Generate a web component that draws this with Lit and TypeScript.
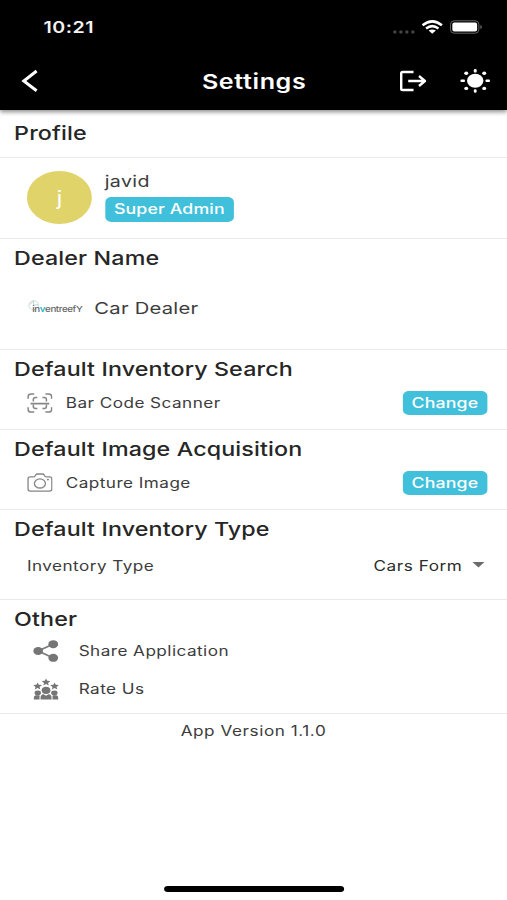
import { LitElement, html, css, svg, type TemplateResult } from "lit";
import { customElement, property } from "lit/decorators.js";

type IconDef = { w: number; h: number; body: TemplateResult };

const star = (x: number, y: number) =>
  svg`<path transform="translate(${x} ${y})" d="M0-3.600 1.200-1.200 4.400-1 2 .9 2.800 3.400 0 2.100-2.800 3.400-2 .9-4.400-1-1.200-1.200Z"/>`;

const icons: Record<string, IconDef> = {
  back: {
    w: 18, h: 24,
    body: svg`<path d="M15.800 2 3 12l12.800 9.800" fill="none" stroke="#fff" stroke-width="3"/>`,
  },
  cell: {
    w: 24, h: 6,
    body: svg`<g fill="#444"><circle cx="3" cy="3" r="1.700"/><circle cx="9" cy="3" r="1.700"/><circle cx="15" cy="3" r="1.700"/><circle cx="21" cy="3" r="1.700"/></g>`,
  },
  wifi: {
    w: 22, h: 14,
    body: svg`<g fill="none" stroke="#fff" stroke-width="2.500"><path d="M1.300 5.300Q11-2.600 20.700 5.300"/><path d="M4.800 8.500Q11 3.700 17.200 8.500"/></g><path d="M7.400 10.600Q11 8.300 14.600 10.600L11 13.700Z" fill="#fff"/>`,
  },
  battery: {
    w: 34, h: 14,
    body: svg`<rect x="1" y=".8" width="28.500" height="12.400" rx="3.800" fill="none" stroke="#666" stroke-width="1"/><rect x="2.900" y="2.500" width="24.800" height="9" rx="2" fill="#fff"/><path d="M30.900 5v4q1.600-.4 1.600-2t-1.600-2Z" fill="#666"/>`,
  },
  logout: {
    w: 28, h: 22,
    body: svg`<g fill="none" stroke="#fff" stroke-width="2.400"><path d="M14.300 2H3.400Q2 2 2 3.300v15.400Q2 20 3.400 20h10.900"/><path d="M9 11h16.500M19.800 6l6 5-6 5"/></g>`,
  },
  sun: {
    w: 32, h: 26,
    body: svg`<g fill="#fff"><ellipse cx="16" cy="12.800" rx="8.200" ry="7"/><rect x="14.600" y="1" width="2.800" height="3.600" rx="1.200"/><rect x="14.600" y="21.200" width="2.800" height="3.600" rx="1.200"/><rect x="1.200" y="11.600" width="4.600" height="2.400" rx="1.100"/><rect x="26.200" y="11.600" width="4.600" height="2.400" rx="1.100"/><ellipse cx="7" cy="5.300" rx="2" ry="1.700"/><ellipse cx="25" cy="5.300" rx="2" ry="1.700"/><ellipse cx="7" cy="20.400" rx="2" ry="1.700"/><ellipse cx="25" cy="20.400" rx="2" ry="1.700"/></g>`,
  },
  scan: {
    w: 26, h: 20,
    body: svg`<g fill="none" stroke="#858585" stroke-width="1.500"><path d="M1.200 5.700V3.600Q1.200 1 4.300 1h3M18.500 1h3q3.200 0 3.200 2.600v2.100M24.700 14.300v2.100q0 2.600-3.200 2.600h-3M7.300 19h-3q-3.100 0-3.100-2.600v-2.100"/><path d="M6.400 8.500V6.600q0-2 2.300-2h1.700M15.500 4.600h1.700q2.300 0 2.300 2v1.900M19.500 11.500v1.900q0 2-2.300 2h-1.700M10.400 15.400H8.700q-2.300 0-2.300-2v-1.900"/><path d="M3.600 10.700h18.800" stroke-width="1.800"/></g>`,
  },
  camera: {
    w: 26, h: 20,
    body: svg`<g fill="none" stroke="#858585" stroke-width="1.300"><path d="M3.300 3.900h3.100q1 0 1.600-.8l.8-1.200q.6-.9 1.800-.9h4.800q1.200 0 1.800.9l.8 1.200q.6.8 1.600.8h3.100q2.200 0 2.200 1.900v10.300q0 2-2.200 2H3.300q-2.200 0-2.200-2V5.800q0-1.900 2.200-1.900Z"/><ellipse cx="13" cy="10.400" rx="5.500" ry="4.600"/></g><ellipse cx="21" cy="6.600" rx="1.100" ry=".9" fill="#858585"/>`,
  },
  share: {
    w: 26, h: 22,
    body: svg`<path d="M20.500 4 5 11l15.500 7" fill="none" stroke="#7d7d7d" stroke-width="1.900"/><g fill="#757575"><ellipse cx="20.200" cy="4.200" rx="4.900" ry="4"/><ellipse cx="5.100" cy="11" rx="4.900" ry="4"/><ellipse cx="20.200" cy="17.800" rx="4.900" ry="4"/></g>`,
  },
  rate: {
    w: 26, h: 22,
    body: svg`<g fill="#757575">${star(13, 4)}${star(4.5, 8)}${star(21.5, 8)}<ellipse cx="13" cy="12.300" rx="4.400" ry="3.600"/><ellipse cx="4.700" cy="15" rx="3.200" ry="2.400"/><ellipse cx="21.300" cy="15" rx="3.200" ry="2.400"/><path d="M7.500 21.500v-2q0-2.900 3-3.300l2.500 1.600 2.500-1.600q3 .4 3 3.300v2Z"/><path d="M.8 21.500v-2q0-2.100 2-2.300h2.500q1.500.1 1.300 1-.2 1.100-.1 3.300ZM25.200 21.500v-2q0-2.100-2-2.300h-2.500q-1.500.1-1.300 1 .2 1.100.1 3.300Z"/></g>`,
  },
  caret: { w: 14, h: 6, body: svg`<path d="M1 0h12L7 5.600Z" fill="#6b6b6b"/>` },
  swirl: {
    w: 12, h: 11,
    body: svg`<g fill="none" stroke-width=".7"><ellipse cx="5.500" cy="5.300" rx="4.800" ry="4.600" stroke="#bccfcf"/><path d="M1.500 4.500 5.500 1v4.300l4.500-.8" stroke="#9fc6cd"/></g>`,
  },
};

/** Icon drawn in device units; the box is narrowed to undo the page's horizontal stretch. */
@customElement("ui-icon")
class UiIcon extends LitElement {
  @property() name = "";
  static styles = css`
    :host { display: block; flex: none; }
    svg { display: block; }
  `;
  render() {
    const i = icons[this.name];
    return html`<svg
      style="width:calc(${i.w}px / var(--stretch));height:${i.h}px"
      viewBox="0 0 ${i.w} ${i.h}"
      preserveAspectRatio="none"
    >${i.body}</svg>`;
  }
}

@customElement("app-root")
export class AppRoot extends LitElement {
  static styles = css`
    :host {
      --stretch: 1.2246;
      display: block;
      width: 507px;
      height: 900px;
      overflow: hidden;
      background: #fff;
      font-family: Inter, "Liberation Sans", sans-serif;
      color: #3c3c3c;
    }
    * { box-sizing: border-box; }
    .screen {
      width: 414px;
      height: 900px;
      display: flex;
      flex-direction: column;
      transform: scaleX(var(--stretch));
      transform-origin: 0 0;
    }
    .header {
      height: 110px;
      flex: none;
      background: #000;
      color: #fff;
      box-shadow: 0 2px 4px rgba(0, 0, 0, 0.45);
      z-index: 1;
    }
    .status {
      height: 52px;
      display: flex;
      align-items: center;
      padding: 2px 19px 0 35.500px;
    }
    .time { font-size: 16px; font-weight: 600; letter-spacing: 0.450px; flex: 1; color: #f2f2f2; }
    .cell { margin: 9px 5px 0 0; }
    .wifi { margin-right: 5px; }
    .bar {
      height: 58px;
      display: grid;
      grid-template-columns: 1fr auto 1fr;
      align-items: center;
      padding: 0 12.500px 0 16.500px;
    }
    .title { font-size: 20.500px; font-weight: 600; letter-spacing: 0.500px; margin-left: -3px; }
    .actions { display: flex; justify-content: flex-end; align-items: center; gap: 27px; }
    .section { border-bottom: 1.500px solid #e9e9e9; flex: none; display: flex; flex-direction: column; }
    .heading {
      margin: 0;
      padding: 0 11.500px;
      font-size: 19px;
      line-height: 24px;
      font-weight: 500;
      letter-spacing: 0.100px;
      color: #262626;
    }
    .profile-title { height: 48px; padding-top: 12px; }
    .profile { height: 81px; flex-direction: row; align-items: center; padding: 0 0 1px 22px; gap: 10.500px; }
    .avatar {
      width: 53px;
      height: 53px;
      border-radius: 50%;
      background: #e0d36a;
      color: #fff;
      display: grid;
      place-items: center;
      font-size: 20px;
    }
    .who { display: flex; flex-direction: column; align-items: flex-start; gap: 5px; padding-bottom: 3px; }
    .name { font-size: 16px; line-height: 22px; letter-spacing: 0.300px; }
    .pill {
      height: 24.500px;
      border-radius: 5px;
      background: #40c0db;
      color: #fff;
      font: 500 14.500px/24px Inter, sans-serif;
      letter-spacing: 0.100px;
      padding: 0 7.500px;
      border: 0;
    }
    .dealer { height: 111px; padding-top: 8px; }
    .dealer-row { display: flex; align-items: center; height: 50px; margin-top: 12px; padding-left: 23px; }
    .logo { width: 43px; display: flex; align-items: center; font-size: 8px; line-height: 10px; letter-spacing: -0.350px; font-weight: 500; color: #666; padding-top: 2px; }
    .logo ui-icon { margin: -8px -6.500px 0 0; }
    .logo b { font-weight: 600; color: #27b5d0; }
    .dealer-name { font-size: 16.500px; letter-spacing: 0.200px; margin-left: 11px; }
    .option { height: 80px; padding-top: 8px; }
    .row { display: flex; align-items: center; height: 24px; margin-top: 9px; padding: 0 16px 0 22px; }
    .label { flex: 1; font-size: 14px; letter-spacing: 0.370px; margin-left: 10.500px; padding-bottom: 1px; }
    .type { height: 90px; padding-top: 8px; }
    .type .row { margin-top: 11px; padding-right: 18px; }
    .type .label { margin-left: 0; padding: 0; }
    .select { display: flex; align-items: center; gap: 7px; font-size: 14px; letter-spacing: 0.450px; color: #2b2b2b; }
    .other { height: 114px; padding-top: 8px; }
    .other .row { height: 38px; margin: 0; padding-left: 27px; }
    .other .label { margin-left: 16px; }
    .version { text-align: center; margin-top: 7px; line-height: 20px; font-size: 14px; letter-spacing: 0.450px; }
    .home { width: 147px; height: 6px; border-radius: 3px; background: #000; margin: auto auto 8px; }
  `;

  private option(title: string, icon: string, label: string) {
    return html`<section class="section option">
      <h2 class="heading">${title}</h2>
      <div class="row">
        <ui-icon name=${icon}></ui-icon><span class="label">${label}</span>
        <button class="pill">Change</button>
      </div>
    </section>`;
  }

  private link(icon: string, label: string) {
    return html`<div class="row"><ui-icon name=${icon}></ui-icon><span class="label">${label}</span></div>`;
  }

  render() {
    return html`<div class="screen">
      <header class="header">
        <div class="status">
          <span class="time">10:21</span>
          <ui-icon class="cell" name="cell"></ui-icon>
          <ui-icon class="wifi" name="wifi"></ui-icon>
          <ui-icon name="battery"></ui-icon>
        </div>
        <div class="bar">
          <ui-icon name="back"></ui-icon>
          <span class="title">Settings</span>
          <div class="actions"><ui-icon name="logout"></ui-icon><ui-icon name="sun"></ui-icon></div>
        </div>
      </header>
      <section class="section profile-title"><h2 class="heading">Profile</h2></section>
      <section class="section profile">
        <div class="avatar">j</div>
        <div class="who"><span class="name">javid</span><span class="pill">Super Admin</span></div>
      </section>
      <section class="section dealer">
        <h2 class="heading">Dealer Name</h2>
        <div class="dealer-row">
          <div class="logo"><ui-icon name="swirl"></ui-icon><span>in<b>v</b>entreefY</span></div>
          <span class="dealer-name">Car Dealer</span>
        </div>
      </section>
      ${this.option("Default Inventory Search", "scan", "Bar Code Scanner")}
      ${this.option("Default Image Acquisition", "camera", "Capture Image")}
      <section class="section type">
        <h2 class="heading">Default Inventory Type</h2>
        <div class="row">
          <span class="label">Inventory Type</span>
          <span class="select">Cars Form <ui-icon name="caret"></ui-icon></span>
        </div>
      </section>
      <section class="section other">
        <h2 class="heading">Other</h2>
        ${this.link("share", "Share Application")} ${this.link("rate", "Rate Us")}
      </section>
      <div class="version">App Version 1.1.0</div>
      <div class="home"></div>
    </div>`;
  }
}
